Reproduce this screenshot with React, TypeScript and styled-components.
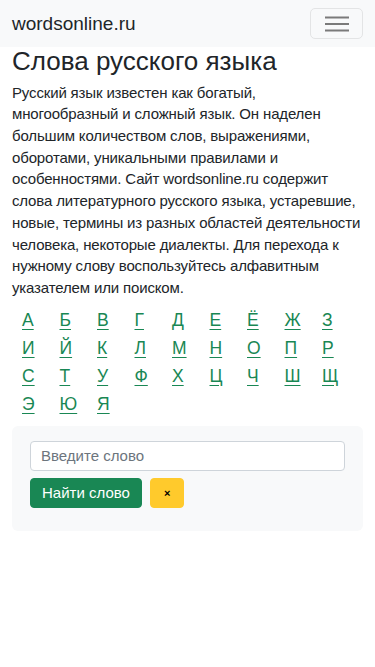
import React from 'react';
import styled, { createGlobalStyle } from 'styled-components';

const GlobalStyle = createGlobalStyle`
  * { box-sizing: border-box; }
  body {
    margin: 0;
    background: #fff;
    color: #212529;
    font-family: "Liberation Sans", Arial, sans-serif;
  }
`;

const Navbar = styled.nav`
  display: flex;
  align-items: center;
  justify-content: space-between;
  height: 47px;
  padding: 0 12px;
  background-color: #f8f9fa;
`;

const Brand = styled.a`
  font-size: 19px;
  color: #212529;
  text-decoration: none;
`;

const Toggler = styled.button`
  display: flex;
  align-items: center;
  justify-content: center;
  width: 53px;
  height: 31px;
  padding: 0;
  background: transparent;
  border: 1px solid #e3e4e5;
  border-radius: 5px;
`;

const Main = styled.main`
  padding: 0 12px;
`;

const Title = styled.h1`
  margin: 0 0 6px;
  font-size: 26px;
  font-weight: 400;
  line-height: 1.1;
`;

const Intro = styled.p`
  margin: 0 0 7px;
  font-size: 15px;
  line-height: 21.7px;
  letter-spacing: -0.15px;
`;

const Alphabet = styled.div`
  display: grid;
  grid-template-columns: repeat(9, 37.5px);
  grid-auto-rows: 28px;
  padding: 0 10px;
`;

const Letter = styled.a`
  font-size: 17.5px;
  line-height: 28px;
  color: #198754;
  text-decoration: underline;
  text-underline-offset: 3px;
`;

const SearchPanel = styled.div`
  margin-top: 8px;
  padding: 15px 18px 23px;
  background-color: #f8f9fa;
  border-radius: 6px;
`;

const Input = styled.input`
  display: block;
  width: 100%;
  height: 30px;
  padding: 0 10px;
  font-family: inherit;
  font-size: 15px;
  color: #212529;
  background: #fff;
  border: 1px solid #ced4da;
  border-radius: 4px;
  &::placeholder { color: #6c757d; }
`;

const Actions = styled.div`
  display: flex;
  gap: 8px;
  margin-top: 7px;
`;

const Button = styled.button<{ $variant: 'success' | 'warning' }>`
  height: 30px;
  padding: 0 ${p => (p.$variant === 'success' ? '11px' : '13px')};
  font-family: inherit;
  font-size: ${p => (p.$variant === 'success' ? '15px' : '11px')};
  font-weight: ${p => (p.$variant === 'success' ? 400 : 700)};
  color: ${p => (p.$variant === 'success' ? '#fff' : '#000')};
  background-color: ${p => (p.$variant === 'success' ? '#198754' : '#ffca2c')};
  border: 1px solid ${p => (p.$variant === 'success' ? '#198754' : '#ffca2c')};
  border-radius: 4px;
`;

const letters = 'АБВГДЕЁЖЗИЙКЛМНОПРСТУФХЦЧШЩЭЮЯ'.split('');

export default function App() {
  return (
    <>
      <GlobalStyle />
      <Navbar>
        <Brand href="#">wordsonline.ru</Brand>
        <Toggler aria-label="menu">
          <svg width="24" height="16" viewBox="0 0 24 16">
            <path d="M0 1.5h24M0 8h24M0 14.5h24" stroke="#7a7a7a" strokeWidth="2" />
          </svg>
        </Toggler>
      </Navbar>
      <Main>
        <Title>Слова русского языка</Title>
        <Intro>
          Русский язык известен как богатый, многообразный и сложный язык. Он наделен большим
          количеством слов, выражениями, оборотами, уникальными правилами и особенностями. Сайт
          wordsonline.ru содержит слова литературного русского языка, устаревшие, новые, термины
          из разных областей деятельности человека, некоторые диалекты. Для перехода к нужному
          слову воспользуйтесь алфавитным указателем или поиском.
        </Intro>
        <Alphabet>
          {letters.map(l => (
            <Letter key={l} href="#">{l}</Letter>
          ))}
        </Alphabet>
        <SearchPanel>
          <Input placeholder="Введите слово" />
          <Actions>
            <Button $variant="success">Найти слово</Button>
            <Button $variant="warning">×</Button>
          </Actions>
        </SearchPanel>
      </Main>
    </>
  );
}
